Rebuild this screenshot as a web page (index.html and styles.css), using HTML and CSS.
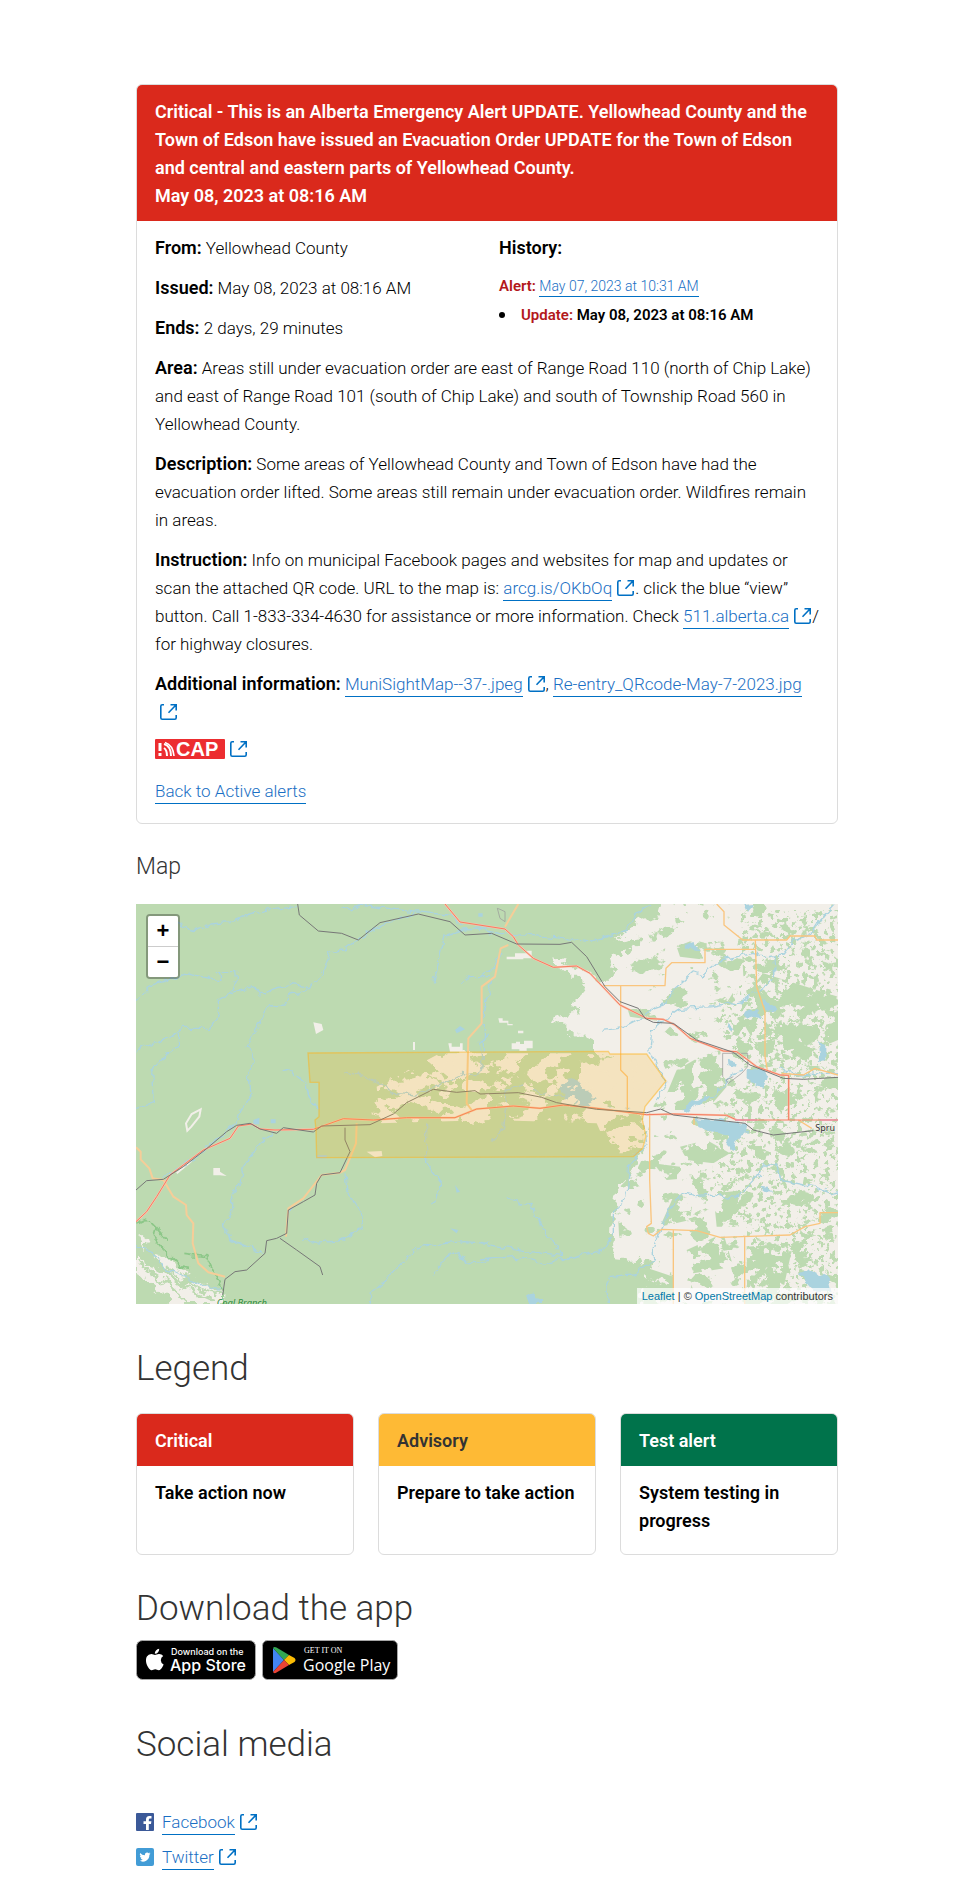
FILE: index.html
```html
<!DOCTYPE html>
<html lang="en">
<head>
<meta charset="utf-8">
<meta name="viewport" content="width=device-width, initial-scale=1">
<title>Alberta Emergency Alert</title>
<link rel="stylesheet" href="styles.css">
</head>
<body>
<svg class="defs" aria-hidden="true">
  <symbol id="ext" viewBox="0 0 17 16"><path d="M4 .8H2.2Q.8.8.8 2.2V13.8Q.8 15.2 2.2 15.2H14.8Q16.2 15.2 16.2 13.8V11M8.500 8.700 15.700 1.300M10.500.8H16.200V6.500" fill="none" stroke="currentColor" stroke-width="1.6"/></symbol>
</svg>
<main class="page">
  <article class="card alert">
    <header class="card-head critical">
      <h1 class="alert-title">Critical - This is an Alberta Emergency Alert UPDATE. Yellowhead County and the Town of Edson have issued an Evacuation Order UPDATE for the Town of Edson and central and eastern parts of Yellowhead County.</h1>
      <p class="alert-date">May 08, 2023 at 08:16 AM</p>
    </header>
    <div class="card-body alert-body">
      <div class="facts">
        <div class="stack">
          <p><strong>From:</strong> Yellowhead County</p>
          <p><strong>Issued:</strong> May 08, 2023 at 08:16 AM</p>
          <p><strong>Ends:</strong> 2 days, 29 minutes</p>
        </div>
        <div class="history">
          <p><strong>History:</strong></p>
          <p class="small first"><strong class="tag">Alert:</strong> <a href="#alert">May 07, 2023 at 10:31 AM</a></p>
          <ul class="small"><li><strong><span class="tag">Update:</span> May 08, 2023 at 08:16 AM</strong></li></ul>
        </div>
      </div>
      <p><strong>Area:</strong> Areas still under evacuation order are east of Range Road 110 (north of Chip Lake) and east of Range Road 101 (south of Chip Lake) and south of Township Road 560 in Yellowhead County.</p>
      <p><strong>Description:</strong> Some areas of Yellowhead County and Town of Edson have had the evacuation order lifted. Some areas still remain under evacuation order. Wildfires remain in areas.</p>
      <p><strong>Instruction:</strong> Info on municipal Facebook pages and websites for map and updates or scan the attached QR code. URL to the map is: <a href="#map-link">arcg.is/OKbOq</a><svg class="ext"><use href="#ext"/></svg>. click the blue “view” button. Call 1-833-334-4630 for assistance or more information. Check <a href="#roads">511.alberta.ca</a><svg class="ext"><use href="#ext"/></svg>/ for highway closures.</p>
      <p><strong>Additional information:</strong> <a href="#jpeg">MuniSightMap--37-.jpeg</a><svg class="ext"><use href="#ext"/></svg>, <a href="#qr">Re-entry_QRcode-May-7-2023.jpg</a> <svg class="ext"><use href="#ext"/></svg></p>
      <p class="cap-row"><a class="plain" href="#cap" aria-label="CAP"><svg class="cap" viewBox="0 0 70 20"><rect width="70" height="20" rx="1" fill="#ec2d30"/><g fill="none" stroke="#fff"><path d="M5 4V12" stroke-width="3"/><path d="M5 14V17" stroke-width="3"/><path d="M9 9Q12 11 12 17M9 5Q16 7 16 17" stroke-width="2"/><path d="M10 3.5Q18 6 19 17" stroke-width="1.6"/></g><text x="21" y="17" class="cap-text">CAP</text></svg><svg class="ext"><use href="#ext"/></svg></a></p>
      <p><a href="#active">Back to Active alerts</a></p>
    </div>
  </article>

  <h2 class="map-title">Map</h2>
  <section class="map" aria-label="Alert area map">
    <svg class="map-art" viewBox="18 42 2106 1200" preserveAspectRatio="xMidYMid slice" aria-hidden="true">
      <defs>
        <filter id="patches" x="0" y="0" width="100%" height="100%" color-interpolation-filters="sRGB"><feTurbulence type="fractalNoise" baseFrequency=".016 .02" numOctaves="5" seed="8"/><feColorMatrix values="0 0 0 0 .741 0 0 0 0 .855 0 0 0 0 .694 30 0 0 0 -18.3"/><feComposite in2="SourceGraphic" operator="in"/></filter>
        <filter id="dense" x="0" y="0" width="100%" height="100%" color-interpolation-filters="sRGB"><feTurbulence type="fractalNoise" baseFrequency=".022" numOctaves="5" seed="15"/><feColorMatrix values="0 0 0 0 .741 0 0 0 0 .855 0 0 0 0 .694 30 0 0 0 -13.6"/><feComposite in2="SourceGraphic" operator="in"/></filter>
        <filter id="specks" x="0" y="0" width="100%" height="100%" color-interpolation-filters="sRGB"><feTurbulence type="fractalNoise" baseFrequency=".06" numOctaves="4" seed="4"/><feColorMatrix values="0 0 0 0 .741 0 0 0 0 .855 0 0 0 0 .694 16 0 0 0 -8.9"/><feComposite in2="SourceGraphic" operator="in"/></filter>
        <filter id="clearing" x="0" y="0" width="100%" height="100%" color-interpolation-filters="sRGB"><feTurbulence type="fractalNoise" baseFrequency=".016 .02" numOctaves="5" seed="21"/><feColorMatrix values="0 0 0 0 .949 0 0 0 0 .937 0 0 0 0 .914 40 0 0 0 -20.6"/><feComposite in2="SourceGraphic" operator="in"/></filter>
        <filter id="rough" x="-5%" y="-5%" width="110%" height="110%" color-interpolation-filters="sRGB"><feTurbulence type="fractalNoise" baseFrequency=".03" numOctaves="4" seed="2"/><feDisplacementMap in="SourceGraphic" scale="50" xChannelSelector="R" yChannelSelector="G"/></filter>
        <filter id="wiggle" x="-5%" y="-5%" width="110%" height="110%" color-interpolation-filters="sRGB"><feTurbulence type="fractalNoise" baseFrequency=".04" numOctaves="2" seed="6"/><feDisplacementMap in="SourceGraphic" scale="26" xChannelSelector="R" yChannelSelector="G"/></filter>
      </defs>
      <rect x="18" y="42" width="2106" height="1200" fill="#bddab1"/>
      <g transform="translate(1050 0)">
        <path filter="url(#rough)" fill="#f2efe9" d="M545 20L540 72 480 90 410 150 478 138 478 160 430 195 385 190 405 250 370 285 320 240 290 235 230 205 230 230 270 260 305 260 315 300 270 345 300 365 210 385 250 400 250 430 305 435 345 465 345 488 410 500 300 525 300 570 270 590 340 650 380 640 420 670 490 680 500 760 460 830 445 880 415 880 400 960 395 1050 410 1105 470 1110 480 1130 515 1100 500 1150 480 1260H1100V20Z"/>
        <path fill="#000" filter="url(#patches)" d="M560 42H1074V1242H500L480 1140 420 1090 410 900 470 840 510 760 500 680 570 570 500 480 580 400 450 380 400 220Z"/>
        <path fill="#000" filter="url(#specks)" d="M780 60H1074V1242H800V1000L690 900 720 650 820 560 700 400 790 260Z"/>
        <path fill="#000" filter="url(#dense)" d="M565 600L590 540 660 500 720 480 740 590 680 660 580 660 530 680ZM590 170L640 150 680 160 680 210 600 200ZM520 820L600 830 620 865 560 870ZM600 770L680 750 750 790 700 820 620 810ZM700 910L800 900 790 1010 710 1010ZM780 330L850 250 1074 320V450L980 490 920 510 850 500 790 400ZM580 920L540 1010 630 990 640 920ZM620 1080L730 1030 760 1130 640 1150ZM490 1130L580 1160V1242H490ZM800 1070L940 1060 900 1242H800Z"/>
        <g fill="#f2efe9"><path d="M55 385H68V392H85V402H98V406H82V398H58ZM95 460H108V455H120V462H132V452H158V475H140V482H118V478H95ZM114 422H130V430H114ZM80 200H105V190H140V182H155V205H130V208H80Z"/></g>
        <g fill="#aad3df" filter="url(#wiggle)"><path d="M800 540L855 540 862 560 848 598 800 565ZM650 685L720 690 805 703 800 728 770 750 760 782 740 760 738 740 655 708ZM610 660L625 638 685 615 688 625 650 645 620 668ZM790 372L830 360 838 380 810 390ZM850 325L890 355 892 368 860 360ZM610 165L645 160 655 180 625 178ZM1018 460H1036V510L1020 515ZM955 1150L985 1137 1045 1165 1055 1205H1005ZM740 512L770 520 768 530 742 525ZM740 395L758 410 755 422 743 410ZM848 888L870 890 872 908 848 905ZM135 1215L160 1210 170 1225 188 1228 180 1242H150ZM790 45L825 42 800 68ZM230 565L290 570 350 625 355 655 260 640Z"/></g>
        <g fill="none" stroke="#aad3df" stroke-width="4" stroke-linejoin="round" filter="url(#wiggle)"><path d="M370 418L430 410 480 385 520 355 550 345 580 300 640 245 670 255 720 210 820 190 860 200 910 195 940 155 1000 125 1030 80 1065 42M880 200L885 240 860 290 790 330 700 350 600 355 550 390 515 420 510 480 540 540 560 575 530 640M0 120L60 130 200 140 330 155 440 120 460 80 510 42M490 690L500 760 450 820 440 920 400 970 400 1030 370 1080 240 1110 200 1120 100 1100 0 1110M470 1150L390 1160 380 1190 385 1242M470 1150L520 1110 520 1070 550 1000 575 950 610 910 650 920 700 915 770 925 830 860 850 825 890 825 900 870 1000 890 1050 910 1074 905M80 920L120 945 150 940 190 1020 245 1100 0 1060M60 190L40 230 0 262M40 260L10 360 10 500M690 630L760 550 790 540M895 535L960 555 1074 548M30 760L70 720 80 650 75 600 130 585 180 610 250 620M355 655L500 655"/></g>
        <g fill="none" stroke="#999" stroke-width="3" opacity=".7"><path d="M728 490H803V530L785 550 745 580 738 570 760 560M728 490V560M52 55L60 85 75 95V65L60 58Z"/></g>
      </g>
      <g filter="url(#rough)" fill="#f2efe9">
        <path d="M18 1100L60 1130 110 1160 150 1190 200 1170 250 1200 280 1205 280 1242H130L90 1200 18 1150ZM18 1030L60 1060 40 1070ZM80 1100L130 1110 170 1160 150 1170 100 1130Z"/>
        <path d="M950 490H1030V515L1010 570H950L930 520ZM850 555L890 560 940 575 900 600 860 580ZM760 580L840 570 830 610 770 600ZM730 640L780 650 800 670 760 690 735 670ZM890 645H980V662H890ZM1030 640L1080 610V680L1045 700 990 690 1000 660Z"/>
      </g>
      <path fill="#f2efe9" d="M250 834H270V845L290 858 270 856H250ZM550 397L575 402 580 420 558 432ZM955 460H965V470H990V460H998V485H960ZM710 785L755 783 757 798 735 802Z"/>
      <path fill="#000" filter="url(#clearing)" d="M740 590L930 490H1330L1540 500 1590 590 1535 790 1440 790 1400 700 1080 690 750 700Z"/>
      <g fill="none" stroke="#f2efe9" stroke-width="6"><path d="M212 658L185 672 168 700 172 722 184 710 208 680ZM852 456V480M140 850L185 812"/></g>
      <path fill="none" stroke="#bddab1" stroke-width="8" filter="url(#rough)" d="M30 1120L120 1190 180 1242M60 1110L160 1190 240 1225M110 1130L190 1190 280 1215"/>
      <g fill="none" stroke="#aad3df" stroke-width="4" stroke-linejoin="round" filter="url(#wiggle)"><path d="M140 95L190 122 240 102 300 98 350 75 400 62 500 50M18 335L60 290 165 250 270 270 265 245 320 245 322 265 300 310 330 300 370 290 400 315 440 290 480 280 540 290 580 250 600 185 640 180 690 145 760 100 860 70M540 290L525 308 480 315 465 345 418 348 385 405 352 470 370 510 355 560 360 620 330 660 315 700 200 800 100 865M300 310L265 330 265 370 240 415 160 415 120 440 18 480M145 430V470L80 520 65 550 70 640 18 655M455 545L480 540 525 580 540 630 565 660M430 725L390 760 340 830 330 880 305 910 305 970 280 1000 300 1050 350 1065 400 1090M645 850L650 900 690 960 698 1010 640 1050 560 1060 520 1045M890 700V820L938 885 905 940M1080 1060L1000 1055 860 1070 790 1150 725 1205 720 1242M910 1150L950 1100 990 1085 1010 1120 1080 1105M640 545L700 560 760 585 790 610 860 615 940 580 1000 550 1040 560 1060 510 1050 460 1080 430M910 280L930 200 945 140 1000 120 1080 115M18 1070L60 1080 100 1130 160 1160 220 1190 280 1195M630 62L690 45 850 65 960 75 1000 110M1000 275L1020 260H1080M480 950L470 1000"/></g>
      <g fill="#aad3df"><path d="M370 690L388 683V703H370ZM975 420L990 408 1005 418 980 430ZM960 1015L985 1020 980 1030ZM975 885L990 905 980 908ZM422 688H437V700H422ZM560 795H590V805H560ZM1045 70H1058V80H1045Z"/></g>
      <g fill="none" stroke="#8cc788" stroke-width="5" filter="url(#wiggle)"><path d="M18 1000L50 985 75 1010 115 1055M75 1010L70 1040 110 1090 150 1130 180 1135M160 1090L230 1100 255 1150 280 1200 278 1242"/></g>
      <g fill="none" stroke-linejoin="round">
        <path stroke="#f6cd98" stroke-width="6" d="M18 772L32 785V808L58 835 68 865 100 870 130 920 168 945 170 975 190 1000 188 1060 205 1120 235 1147 285 1160M680 700L678 760 645 840 630 848 575 855 520 925 475 955 468 1040M1165 42L1125 110M1135 165L1112 175 1095 260 1055 290V400L1015 445 1010 640 1025 660"/>
        <path stroke="#fac57e" stroke-width="4" d="M1760 42L1782 65V105L1838 150H1970L1980 138H2055L2060 150H2124M1876 150L1880 290 1905 365V500L1912 540M1420 287H1605L1608 235 1625 218H1725V178H1876M1472 287V540L1492 560V660M1559 670V870L1564 1000 1550 1010 1555 1030 1570 1038 1595 1018 1700 1022 1770 1042 1980 1035 2025 1010 2070 1000V968H2124M1630 1020V1242M1844 1037V1242M1692 680V705M1955 550L2020 555 2055 535 2124 555M2005 690L2045 715"/>
      </g>
      <g fill="none" stroke-linejoin="round">
        <path stroke="#fbc5ae" stroke-width="6" d="M18 995L50 965 80 920 120 855 220 780 300 745 325 708 365 702 390 717 435 720 550 718 640 686 730 690 830 683 975 683 1040 657 1150 648 1230 655 1300 645 1400 655 1550 674 1630 672 1790 676 1820 690M945 42L990 96 1125 117 1150 140 1165 165 1210 205 1270 232 1340 228 1380 250 1470 345 1550 385 1600 388 1635 405 1680 445 1780 483 1820 485 1880 530 1950 555 1976 556V690"/>
        <path stroke="#f57c61" stroke-width="3" d="M18 995L50 965 80 920 120 855 220 780 300 745 325 708 365 702 390 717 435 720 550 718 640 686 730 690 830 683 975 683 1040 657 1150 648 1230 655 1300 645 1400 655 1550 674 1630 672 1790 676 1820 690H2124M945 42L990 96 1125 117 1150 140 1165 165 1210 205 1270 232 1340 228 1380 250 1470 345 1550 385 1600 388 1635 405 1680 445 1780 483 1820 485 1880 530 1950 555 1976 556V690"/>
        <path stroke="#e892a2" stroke-width="5" d="M1815 690H1882M2070 690H2124"/>
        <path stroke="#777" stroke-width="3" d="M18 900L50 872 100 868 160 830 225 780 290 725 320 706 360 700 390 717 440 730 460 713 550 726 575 708 720 704 790 672 830 638 910 598 980 607 1035 602 1050 612 1165 608 1235 622 1280 638 1400 658 1550 668 1592 657 1630 675 1845 700 1870 720 1930 735 2050 722M645 713V750L660 785 630 848 575 855 560 880 555 915 520 935 475 960 470 1030 440 1045 410 1052 405 1090 350 1140 315 1145 285 1168 278 1215M450 1045L500 1080 570 1130 578 1155M503 42L508 75 565 123 635 130 685 150 750 98 865 72 960 95 1005 135 1085 130 1160 162 1290 163 1325 157 1370 200 1425 290 1470 335 1525 355 1545 385 1570 397 1630 400 1700 450 1810 487 1860 525 1960 565 2020 568 2124 562"/>
      </g>
      <path d="M534 489L1435 484 1440 492H1550L1608 573 1545 650 1537 690 1548 738 1538 775 1510 800 560 803 558 720 555 690 567 680V577H540Z" fill="#ffb319" fill-opacity=".2" stroke="#ffb319" stroke-opacity=".5" stroke-width="4"/>
      <text class="place" x="2056" y="723">Spru</text>
      <text class="park" x="260" y="1247">Coal Branch</text>
    </svg>
    <div class="zoom"><button type="button" aria-label="Zoom in">+</button><button type="button" aria-label="Zoom out">−</button></div>
    <p class="credit"><a href="#leaflet">Leaflet</a> | © <a href="#osm">OpenStreetMap</a> contributors</p>
  </section>

  <h2 class="section-title">Legend</h2>
  <div class="legend">
    <section class="card"><h3 class="card-head critical">Critical</h3><p class="card-body">Take action now</p></section>
    <section class="card"><h3 class="card-head advisory">Advisory</h3><p class="card-body">Prepare to take action</p></section>
    <section class="card"><h3 class="card-head test">Test alert</h3><p class="card-body">System testing in progress</p></section>
  </div>

  <h2 class="section-title download-title">Download the app</h2>
  <div class="badges">
    <a class="plain" href="#ios" aria-label="Download on the App Store"><svg width="120" height="40" viewBox="0 0 120 40"><rect x=".5" y=".5" width="119" height="39" rx="6" stroke="#a6a6a6"/><path fill="#fff" d="M24.8 20.3a5 5 0 0 1 2.4-4.2 5.1 5.1 0 0 0-4-2.2c-1.700-.2-3.300 1-4.200 1s-2.200-1-3.600-1a5.300 5.300 0 0 0-4.500 2.700c-1.900 3.300-.5 8.200 1.400 10.900.9 1.300 2 2.800 3.400 2.700s1.900-.9 3.500-.9 2.100.9 3.600.9 2.400-1.300 3.300-2.600a11 11 0 0 0 1.500-3.100 4.800 4.800 0 0 1-2.800-4.200ZM22.100 12.200a4.900 4.900 0 0 0 1.100-3.500 5 5 0 0 0-3.200 1.700 4.600 4.600 0 0 0-1.200 3.400 4.100 4.100 0 0 0 3.300-1.600Z"/><text class="store-small" x="35" y="15">Download on the</text><text class="store-name" x="34" y="31">App Store</text></svg></a>
    <a class="plain" href="#android" aria-label="Get it on Google Play"><svg width="136" height="40" viewBox="0 0 136 40"><rect x=".5" y=".5" width="135" height="39" rx="5" stroke="#a6a6a6"/><path fill="#4285f4" d="M11 8V32L22 20Z"/><path fill="#34a853" d="M11 8Q12 6.500 14.500 7.500L27 15 22 20Z"/><path fill="#fbbc04" d="M27 15L32.500 18Q34.500 20 32.500 22L27 25 22 20Z"/><path fill="#ea4335" d="M11 32Q12 34 14.500 32.500L27 25 22 20Z"/><text class="play-small" x="42" y="13">GET IT ON</text><text class="play-name" x="41" y="31">Google Play</text></svg></a>
  </div>

  <h2 class="section-title">Social media</h2>
  <ul class="social">
    <li><svg class="social-icon" viewBox="0 0 18 18"><rect width="18" height="18" rx="1" fill="#3b5998"/><path fill="#fff" d="M10 17V11H7.500V8.300H10V6.500Q10 3 13.300 3H15.500V5.600H14Q12.800 5.600 12.800 6.800V8.300H15.400L15 11H12.800V17Z"/></svg><span><a href="#facebook">Facebook</a><svg class="ext"><use href="#ext"/></svg></span></li>
    <li><svg class="social-icon" viewBox="0 0 18 18"><rect width="18" height="18" rx="2" fill="#429cd6"/><path fill="#fff" d="M14.500 5.500a5 5 0 0 1-1.300.4 2.300 2.300 0 0 0 1-1.300 4 4 0 0 1-1.400.6 2.300 2.300 0 0 0-3.900 2.100A6.500 6.500 0 0 1 4.200 4.900a2.300 2.300 0 0 0 .7 3.100 2 2 0 0 1-1-.3 2.300 2.300 0 0 0 1.800 2.300 2 2 0 0 1-1 0 2.300 2.300 0 0 0 2.100 1.600A4.600 4.600 0 0 1 3.400 12.600a6.500 6.500 0 0 0 10-5.800 5 5 0 0 0 1.100-1.300Z"/></svg><span><a href="#twitter">Twitter</a><svg class="ext"><use href="#ext"/></svg></span></li>
  </ul>
</main>
</body>
</html>
```
FILE: styles.css
```css
* { box-sizing: border-box; }
body { margin: 0; background: #fff; color: #000; font: 350 17px/28px Roboto, "Liberation Sans", sans-serif; }
h1, h2, h3, p, ul { margin: 0; padding: 0; }
strong { font-weight: 600; font-size: 18px; line-height: 1; }
a { color: #1a6fc4; text-decoration: none; border-bottom: 1px solid #0070c4; padding-bottom: 2px; }
.plain { border: 0; padding: 0; display: inline-flex; align-items: center; }
.defs { display: none; }
.page { max-width: 702px; margin: 0 auto; padding: 84px 0 24px; }
.ext { width: 17px; height: 16px; margin: 0 1px 0 5px; color: #0070c4; vertical-align: -2px; }

.card { border: 1px solid #dcdcdc; border-radius: 6px; overflow: hidden; }
.card-head { padding: 13px 18px 11px; color: #fff; font-size: 18px; line-height: 28px; font-weight: 600; }
.critical { background: #da291c; }
.advisory { background: #feba35; color: #333; }
.test { background: #00734b; }
.card-body { padding: 13px 18px; }
.alert-title { font-size: 18px; font-weight: 600; }
.alert-date { font-weight: 600; }
.alert-body { display: flex; flex-direction: column; gap: 12px; padding-bottom: 18px; }
.stack { display: flex; flex-direction: column; gap: 12px; }
.facts { display: grid; grid-template-columns: 344px 1fr; }
.small { font-size: 14px; line-height: 28px; }
.small strong { font-size: 15px; }
.first { margin-top: 10px; }
.history ul { padding-left: 18px; }
.history li { padding-left: 4px; }
.history li::marker { font-size: 18px; }
.tag { color: #b3181b; }
.cap-row { display: flex; height: 27px; padding-bottom: 5px; align-items: center; }
.cap { width: 70px; height: 20px; }
.cap-text { font: 700 20px "Liberation Sans", sans-serif; fill: #fff; }

.map-title { margin: 28px 0 22px; color: #333; font-size: 23px; line-height: 30px; font-weight: 350; }
.map { position: relative; height: 400px; overflow: hidden; }
.map-art { display: block; width: 100%; height: 100%; }
.place { font: 27px "Noto Sans", sans-serif; fill: #333; stroke: #f2efe9; stroke-width: 4px; paint-order: stroke; }
.park { font: italic 28px "Noto Sans", sans-serif; fill: #2a8a3a; }
.zoom { position: absolute; left: 10px; top: 10px; border: 2px solid rgba(0, 0, 0, .3); border-radius: 4px; display: flex; flex-direction: column; }
.zoom button { width: 30px; height: 30px; padding: 0; border: 0; background: #fff; font: 700 22px/30px "Liberation Sans", sans-serif; color: #000; border-radius: 2px 2px 0 0; }
.zoom button:first-child { height: 31px; border-bottom: 1px solid #ccc; }
.zoom button:last-child { border-radius: 0 0 2px 2px; }
.credit { position: absolute; right: 0; bottom: 0; padding: 0 5px; background: rgba(255, 255, 255, .7); color: #333; font: 11px/16px "Liberation Sans", sans-serif; }
.credit a { border: 0; padding: 0; color: #0078a8; }

.section-title { margin: 41px 0 20px; color: #333; font-size: 35px; line-height: 48px; font-weight: 350; }
.legend { display: grid; grid-template-columns: repeat(3, 1fr); gap: 24px; }
.legend .card { min-height: 142px; }
.legend .card-body { font-size: 18px; font-weight: 600; }
.download-title { margin: 30px 0 7px; }
.badges { display: flex; gap: 6px; }
.badges + .section-title { margin-bottom: 39px; }
.store-small { font: 500 9px Inter, sans-serif; fill: #fff; }
.store-name { font: 500 16px Inter, sans-serif; fill: #fff; }
.play-small { font: 8px "Liberation Serif", serif; fill: #fff; }
.play-name { font: 500 16px "Open Sans", sans-serif; fill: #fff; }
.social { list-style: none; display: flex; flex-direction: column; gap: 7px; }
.social li { display: flex; align-items: center; gap: 8px; }
.social-icon { width: 18px; height: 18px; }
```
